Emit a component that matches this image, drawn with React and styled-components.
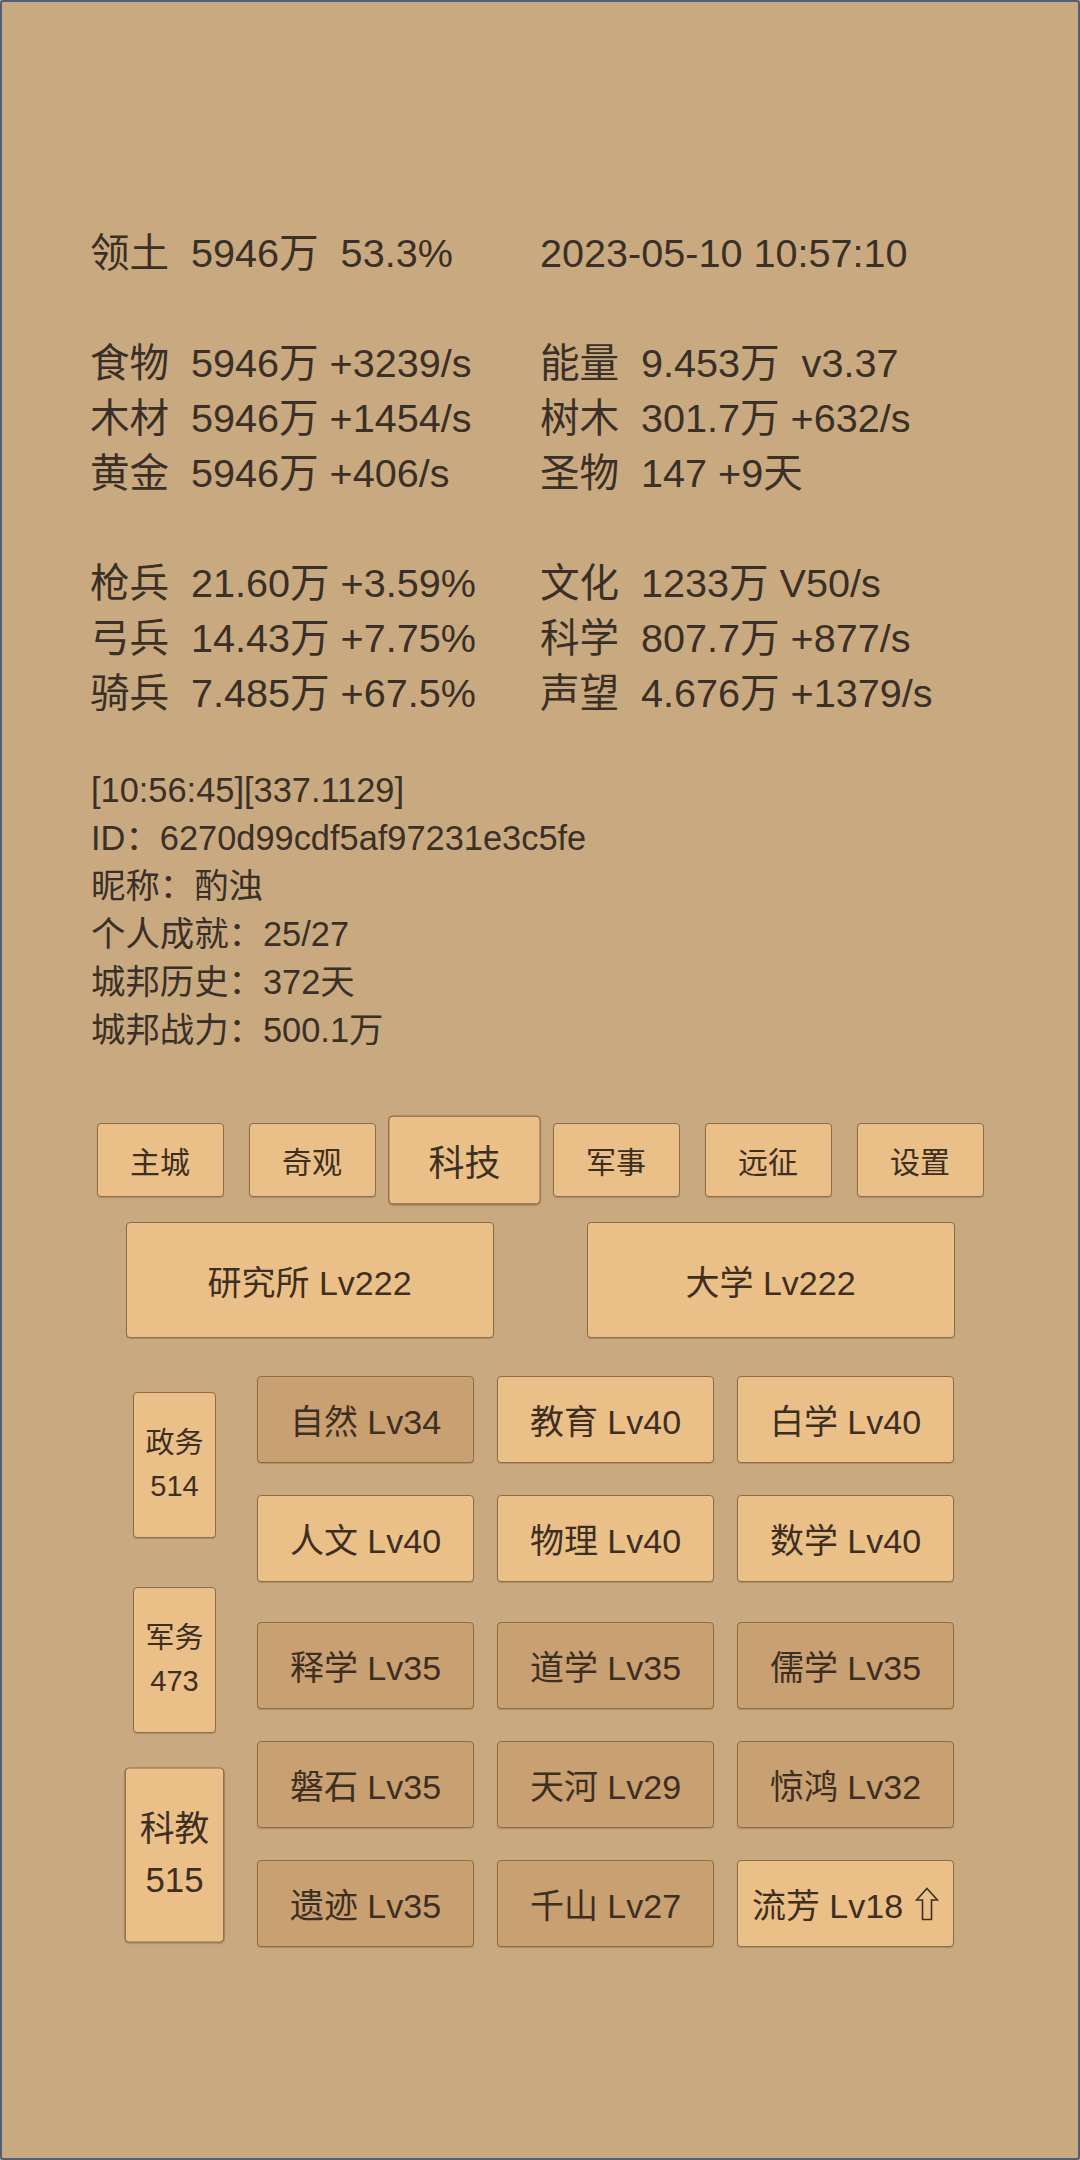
import React from "react";
import styled, { createGlobalStyle, css } from "styled-components";

const Global = createGlobalStyle`
  html, body { margin: 0; padding: 0; background: #c9aa80; }
  * { box-sizing: border-box; }
`;

const Page = styled.div`
  width: 1080px;
  height: 2160px;
  border: 2px solid #525d79;
  border-radius: 3px;
  background: #c9aa80;
  color: #3a3027;
  font-family: "Liberation Sans", "Noto Sans CJK SC", sans-serif;
  padding-top: 224px;
  overflow: hidden;
`;

const StatsGrid = styled.div`
  display: grid;
  grid-template-columns: 450px 1fr;
  grid-auto-rows: 55px;
  padding-left: 88px;
  font-size: 39.6px;
  line-height: 55px;
`;

const StatLine = styled.div`
  display: flex;
  white-space: pre;
`;

const Label = styled.span`
  width: 80px;
  margin-right: 21px;
  flex: none;
`;

const BlankRow = styled.div`
  grid-column: 1 / span 2;
`;

const Log = styled.div`
  margin-top: 45px;
  padding-left: 89px;
  font-size: 34.4px;
  line-height: 48px;
  white-space: pre;
`;

const Tabs = styled.div`
  display: flex;
  justify-content: center;
  gap: 25px;
  margin-top: 69px;
`;

const buttonBase = css`
  display: flex;
  align-items: center;
  justify-content: center;
  border: 1px solid #8d6c48;
  border-radius: 4px;
  color: #3d2f21;
  font-family: "Liberation Sans", "Noto Sans CJK SC", sans-serif;
  box-shadow: 0 1px 1px rgba(90, 60, 30, 0.25);
`;

const TabButton = styled.div`
  ${buttonBase}
  width: 127px;
  height: 74px;
  background: #ebc088;
  font-size: 30px;
  transform: ${(p) => (p.$active ? "scale(1.2)" : "none")};
`;

const BigRow = styled.div`
  display: flex;
  justify-content: center;
  gap: 93px;
  margin-top: 25px;
`;

const BigButton = styled.div`
  ${buttonBase}
  width: 368px;
  height: 116px;
  background: #ebc088;
  font-size: 34px;
  white-space: pre;
`;

const TechSection = styled.div`
  display: flex;
  align-items: flex-start;
  margin-top: 38px;
  padding-left: 131px;
`;

const Sidebar = styled.div`
  display: flex;
  flex-direction: column;
  gap: 49px;
  padding-top: 16px;
  width: 83px;
  flex: none;
`;

const SideButton = styled.div`
  ${buttonBase}
  flex-direction: column;
  width: 83px;
  height: 146px;
  background: #ebc088;
  font-size: 29px;
  line-height: 43px;
  text-align: center;
  transform: ${(p) => (p.$active ? "scale(1.2)" : "none")};
`;

const TechGrid = styled.div`
  display: flex;
  flex-direction: column;
  gap: 32px;
  margin-left: 41px;
`;

const TechRow = styled.div`
  display: grid;
  grid-template-columns: repeat(3, 217px);
  column-gap: 23px;
  height: 87px;
  margin-top: ${(p) => (p.$shift ? "8px" : "0")};
`;

const TechButton = styled.div`
  ${buttonBase}
  background: ${(p) => (p.$dark ? "#c9a071" : "#ebc088")};
  font-size: 34px;
  white-space: pre;
`;

const UpArrow = styled.svg`
  width: 24px;
  height: 34px;
  margin-left: 12px;
  flex: none;
`;

const leftStats = [
  ["领土", "5946万  53.3%"],
  null,
  ["食物", "5946万 +3239/s"],
  ["木材", "5946万 +1454/s"],
  ["黄金", "5946万 +406/s"],
  null,
  ["枪兵", "21.60万 +3.59%"],
  ["弓兵", "14.43万 +7.75%"],
  ["骑兵", "7.485万 +67.5%"],
];

const rightStats = [
  [null, "2023-05-10 10:57:10"],
  null,
  ["能量", "9.453万  v3.37"],
  ["树木", "301.7万 +632/s"],
  ["圣物", "147 +9天"],
  null,
  ["文化", "1233万 V50/s"],
  ["科学", "807.7万 +877/s"],
  ["声望", "4.676万 +1379/s"],
];

const logLines = [
  "[10:56:45][337.1129]",
  "ID：6270d99cdf5af97231e3c5fe",
  "昵称：酌浊",
  "个人成就：25/27",
  "城邦历史：372天",
  "城邦战力：500.1万",
];

const tabs = ["主城", "奇观", "科技", "军事", "远征", "设置"];

const sides = [
  { name: "政务", value: "514" },
  { name: "军务", value: "473" },
  { name: "科教", value: "515", active: true },
];

const techRows = [
  {
    items: [{ t: "自然 Lv34", dark: true }, { t: "教育 Lv40" }, { t: "白学 Lv40" }],
  },
  {
    items: [{ t: "人文 Lv40" }, { t: "物理 Lv40" }, { t: "数学 Lv40" }],
  },
  {
    shift: true,
    items: [
      { t: "释学 Lv35", dark: true },
      { t: "道学 Lv35", dark: true },
      { t: "儒学 Lv35", dark: true },
    ],
  },
  {
    items: [
      { t: "磐石 Lv35", dark: true },
      { t: "天河 Lv29", dark: true },
      { t: "惊鸿 Lv32", dark: true },
    ],
  },
  {
    items: [
      { t: "遗迹 Lv35", dark: true },
      { t: "千山 Lv27", dark: true },
      { t: "流芳 Lv18", arrow: true },
    ],
  },
];

function renderStat(item) {
  const [label, value] = item;
  return (
    <StatLine>
      {label && <Label>{label}</Label>}
      <span>{value}</span>
    </StatLine>
  );
}

export default function App() {
  const rows = [];
  leftStats.forEach((l, i) => {
    const r = rightStats[i];
    if (!l) {
      rows.push(<BlankRow key={"b" + i} />);
    } else {
      rows.push(<React.Fragment key={"l" + i}>{renderStat(l)}</React.Fragment>);
      rows.push(<React.Fragment key={"r" + i}>{renderStat(r)}</React.Fragment>);
    }
  });

  return (
    <>
      <Global />
      <Page>
        <StatsGrid>{rows}</StatsGrid>
        <Log>
          {logLines.map((l) => (
            <div key={l}>{l}</div>
          ))}
        </Log>
        <Tabs>
          {tabs.map((t) => (
            <TabButton key={t} $active={t === "科技"}>
              {t}
            </TabButton>
          ))}
        </Tabs>
        <BigRow>
          <BigButton>研究所 Lv222</BigButton>
          <BigButton>大学 Lv222</BigButton>
        </BigRow>
        <TechSection>
          <Sidebar>
            {sides.map((s) => (
              <SideButton key={s.name} $active={s.active}>
                <div>{s.name}</div>
                <div>{s.value}</div>
              </SideButton>
            ))}
          </Sidebar>
          <TechGrid>
            {techRows.map((row, ri) => (
              <TechRow key={ri} $shift={row.shift}>
                {row.items.map((b) => (
                  <TechButton key={b.t} $dark={b.dark}>
                    {b.t}
                    {b.arrow && (
                      <UpArrow viewBox="0 0 24 34">
                        <path
                          d="M12 1.5 L22.5 13 L16.5 13 L16.5 32.5 L7.5 32.5 L7.5 13 L1.5 13 Z"
                          fill="none"
                          stroke="#3d2f21"
                          strokeWidth="1.6"
                          strokeLinejoin="miter"
                        />
                      </UpArrow>
                    )}
                  </TechButton>
                ))}
              </TechRow>
            ))}
          </TechGrid>
        </TechSection>
      </Page>
    </>
  );
}
